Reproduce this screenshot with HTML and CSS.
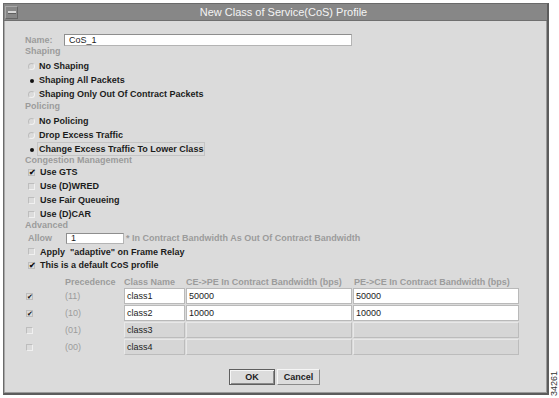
FILE: index.html
```html
<!DOCTYPE html>
<html lang="en">
<head>
  <meta charset="UTF-8" />
  <title>New Class of Service(CoS) Profile</title>
  <link rel="stylesheet" href="styles.css">
</head>
<body>
  <div class="screen">
    <div class="window">
      <div class="titlebar">
        <span class="menu-btn"><span class="menu-bar"></span></span>
        <span class="title">New Class of Service(CoS) Profile</span>
      </div>
      <div class="body">
        <div class="name-row">
          <span class="muted name-label">Name:</span>
          <input class="field name-field" type="text" value="CoS_1">
        </div>

        <div class="section muted">Shaping</div>
        <div class="group">
          <div class="opt"><span class="radio"></span>No Shaping</div>
          <div class="opt"><span class="radio on"></span>Shaping All Packets</div>
          <div class="opt"><span class="radio"></span>Shaping Only Out Of Contract Packets</div>
        </div>

        <div class="section muted">Policing</div>
        <div class="group">
          <div class="opt"><span class="radio"></span>No Policing</div>
          <div class="opt"><span class="radio"></span>Drop Excess Traffic</div>
          <div class="opt"><span class="radio on"></span><span class="focus">Change Excess Traffic To Lower Class</span></div>
        </div>

        <div class="section muted short">Congestion Management</div>
        <div class="opt"><span class="check on">✔</span>Use GTS</div>
        <div class="opt"><span class="check"></span>Use (D)WRED</div>
        <div class="opt"><span class="check"></span>Use Fair Queueing</div>
        <div class="opt"><span class="check"></span>Use (D)CAR</div>

        <div class="section muted short">Advanced</div>
        <div class="allow-row">
          <span class="muted allow-label">Allow</span>
          <input class="field allow-field" type="text" value="1">
          <span class="muted">* In Contract Bandwidth As Out Of Contract Bandwidth</span>
        </div>
        <div class="opt apply"><span class="check"></span>Apply &nbsp;"adaptive" on Frame Relay</div>
        <div class="opt"><span class="check on">✔</span>This is a default CoS profile</div>

        <div class="table">
          <div></div>
          <div class="th">Precedence</div>
          <div class="th">Class Name</div>
          <div class="th">CE-&gt;PE In Contract Bandwidth (bps)</div>
          <div class="th pe">PE-&gt;CE In Contract Bandwidth (bps)</div>

          <div class="tc"><span class="check small on">✔</span></div>
          <div class="prec">(11)</div>
          <div class="cell edit">class1</div>
          <div class="cell edit">50000</div>
          <div class="cell edit">50000</div>

          <div class="tc"><span class="check small on">✔</span></div>
          <div class="prec">(10)</div>
          <div class="cell edit">class2</div>
          <div class="cell edit">10000</div>
          <div class="cell edit">10000</div>

          <div class="tc"><span class="check small"></span></div>
          <div class="prec">(01)</div>
          <div class="cell">class3</div>
          <div class="cell"></div>
          <div class="cell"></div>

          <div class="tc"><span class="check small"></span></div>
          <div class="prec">(00)</div>
          <div class="cell">class4</div>
          <div class="cell"></div>
          <div class="cell"></div>
        </div>

        <div class="buttons">
          <button class="btn default">OK</button>
          <button class="btn">Cancel</button>
        </div>
      </div>
    </div>
    <div class="side">
      <span class="fig">34261</span>
    </div>
  </div>
</body>
</html>
```

FILE: styles.css
```css
body {
  margin: 0;
  background: #ffffff;
  font-family: "Liberation Sans", Arial, sans-serif;
  font-size: 9px;
  color: #1c1c1c;
}

.screen {
  display: flex;
  width: 559px;
  height: 398px;
  overflow: hidden;
}

.window {
  margin: 3px 0 0 3px;
  width: 546px;
  height: 392px;
  box-sizing: border-box;
  border: 1px solid #6a6a6a;
  border-right: 2px solid #5c5c5c;
  border-bottom: 2px solid #5c5c5c;
  background: #dbdbdb;
  box-shadow: inset -1px -1px 0 #9a9a9a, inset 1px 0 0 #a8a8a8;
  display: flex;
  flex-direction: column;
}

.titlebar {
  height: 16px;
  background: #878787;
  border-bottom: 1px solid #6f6f6f;
  display: flex;
  align-items: center;
}

.menu-btn {
  width: 13px;
  height: 13px;
  margin-left: 1px;
  box-sizing: border-box;
  border: 1px solid;
  border-color: #a9a9a9 #666 #666 #a9a9a9;
  display: flex;
  align-items: center;
  justify-content: center;
}

.menu-bar {
  width: 8px;
  height: 2px;
  background: #d8d8d8;
  border-bottom: 1px solid #5e5e5e;
}

.title {
  flex: 1;
  text-align: center;
  color: #f4f4f4;
  font-size: 11px;
  padding-left: 2px;
}

.body {
  padding: 12px 0 0 18px;
}

.muted {
  color: #9b9b9b;
  font-weight: bold;
}

.name-row {
  display: flex;
  align-items: center;
  height: 13px;
  padding-left: 3px;
}

.name-label {
  width: 39px;
}

.field {
  box-sizing: border-box;
  height: 12px;
  margin: 0;
  padding: 0 0 0 4px;
  border: 1px solid #b4b4b4;
  border-top-color: #8e8e8e;
  border-left-color: #8e8e8e;
  background: #ffffff;
  font-family: "Liberation Sans", Arial, sans-serif;
  font-size: 9px;
  color: #1c1c1c;
}

.name-field {
  width: 288px;
}

.section {
  height: 10px;
  line-height: 10px;
  padding-left: 3px;
}

.section.short {
  height: 9px;
  line-height: 9px;
}

.group {
  margin-top: 3px;
}

.opt {
  height: 14px;
  display: flex;
  align-items: center;
  padding-left: 6px;
  font-weight: bold;
}

.opt.apply {
  height: 13px;
}

.focus {
  outline: 1px solid #c4c4c4;
  outline-offset: 1px;
}

.radio {
  width: 7px;
  height: 7px;
  margin-right: 4px;
  box-sizing: border-box;
  border-radius: 50%;
  border: 1px solid #bdbdbd;
  border-bottom-color: #f2f2f2;
  border-right-color: #f2f2f2;
  position: relative;
}

.radio.on {
  border-color: transparent;
}

.radio.on::after {
  content: "";
  position: absolute;
  left: 1px;
  top: 1px;
  width: 4px;
  height: 4px;
  border-radius: 50%;
  background: #111;
}

.check {
  width: 7px;
  height: 7px;
  margin-right: 5px;
  box-sizing: border-box;
  border: 1px solid #bdbdbd;
  border-right-color: #f0f0f0;
  border-bottom-color: #f0f0f0;
  font-size: 8px;
  line-height: 5px;
  text-align: center;
  color: #111;
}

.check.on {
  border-color: #bdbdbd;
  overflow: visible;
}

.allow-row {
  display: flex;
  align-items: center;
  height: 14px;
  margin-top: 1px;
  padding-left: 6px;
}

.allow-label {
  width: 38px;
}

.allow-field {
  width: 58px;
  height: 11px;
  margin-right: 2px;
}

.table {
  margin-top: 6px;
  display: grid;
  grid-template-columns: 42px 58px 61px 166px 166px;
  grid-template-rows: 9px repeat(4, 16px);
  column-gap: 1px;
  row-gap: 1px;
}

.th {
  color: #9b9b9b;
  font-weight: bold;
  line-height: 9px;
  white-space: nowrap;
}

.th.pe {
  padding-left: 1px;
}

.tc {
  display: flex;
  align-items: center;
  padding-left: 4px;
}

.check.small {
  font-size: 7px;
}

.prec {
  display: flex;
  align-items: center;
  color: #9b9b9b;
}

.cell {
  display: flex;
  align-items: center;
  padding-left: 2px;
  border: 1px solid #bcbcbc;
  border-top-color: #e8e8e8;
  border-left-color: #e8e8e8;
  background: #d6d6d6;
  font-size: 9px;
}

.cell.edit {
  background: #ffffff;
  border-color: #b9b9b9;
}

.buttons {
  margin-top: 14px;
  display: flex;
  justify-content: center;
  gap: 2px;
  padding-right: 20px;
}

.btn {
  height: 16px;
  margin: 0;
  padding: 0;
  box-sizing: border-box;
  background: #dcdcdc;
  border: 1px solid;
  border-color: #f6f6f6 #8a8a8a #8a8a8a #f6f6f6;
  font-family: "Liberation Sans", Arial, sans-serif;
  font-size: 9px;
  font-weight: bold;
  color: #1c1c1c;
  width: 43px;
}

.btn.default {
  width: 46px;
  border: 1px solid #5f5f5f;
  box-shadow: inset 1px 1px 0 #f6f6f6, inset -1px -1px 0 #8a8a8a;
}

.side {
  flex: 1;
  display: flex;
  align-items: flex-end;
  justify-content: center;
  padding-bottom: 2px;
}

.fig {
  writing-mode: vertical-rl;
  transform: rotate(180deg);
  font-size: 9px;
  color: #333;
}
```
